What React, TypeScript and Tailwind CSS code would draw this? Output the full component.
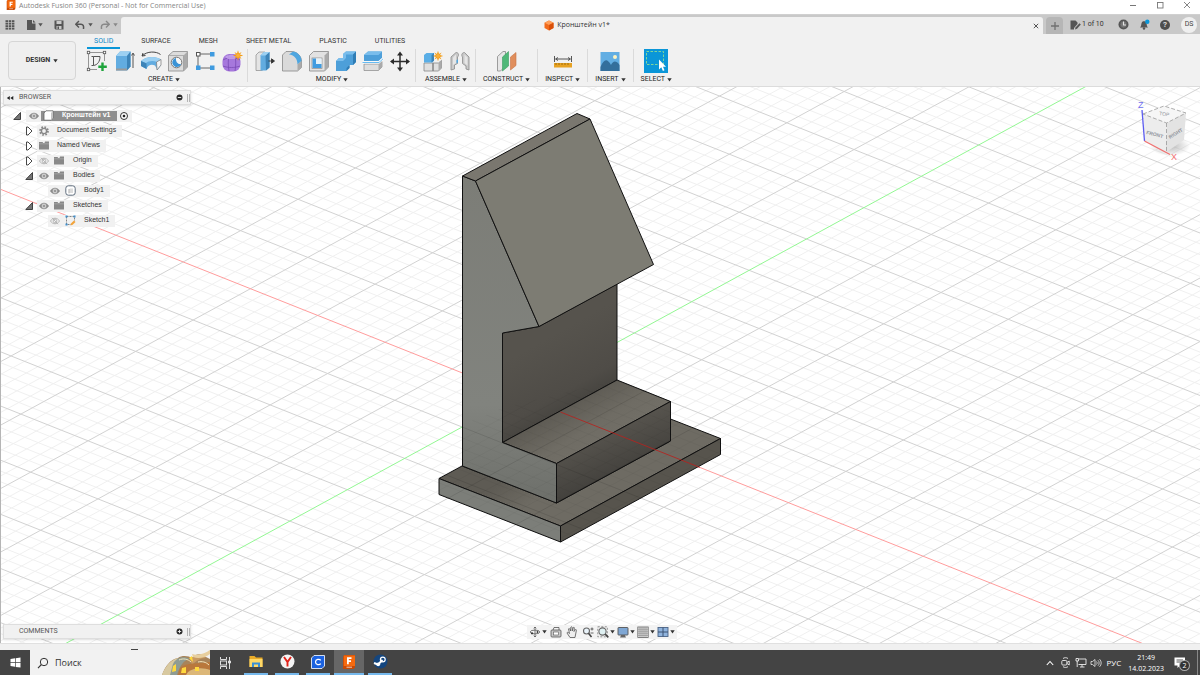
import React from "react";

type Pt = [number, number];

/* ---------- shared bits ---------- */

const Caret = ({ color = "#333" }: { color?: string }) => (
  <svg width="5" height="4" viewBox="0 0 5 4" aria-hidden="true" className="shrink-0">
    <path d="M0.3 0.3H4.7L2.5 3.6Z" fill={color} />
  </svg>
);

function Ico({ w = 24, h = 24, children }: { w?: number; h?: number; children: React.ReactNode }) {
  return (
    <svg width={w} height={h} viewBox={`0 0 ${w} ${h}`} fill="none" aria-hidden="true" className="shrink-0">
      {children}
    </svg>
  );
}

/* ---------- ribbon icons (24 x 24) ---------- */

const blue = "#62ace0";
const blueDark = "#3d84b8";
const blueLight = "#9cd0f2";

const Star = ({ x, y }: { x: number; y: number }) => (
  <g transform={`translate(${x} ${y})`}>
    <path
      d="M0-5.2 1-2 3.6-3.6 2-1 5.2 0 2 1 3.6 3.6 1 2 0 5.2-1 2-3.6 3.6-2 1-5.2 0-2-1-3.6-3.6-1-2Z"
      fill="#f39c12"
    />
    <circle r="2" fill="#fbb03b" />
  </g>
);

const SketchIcon = (
  <Ico>
    <path d="M5 3.5H18M3.5 5V19M19.5 5V12M5 20.5H12" stroke="#8a8a8a" strokeWidth=".9" />
    <path d="M8.500 7.500H15C15 12.500 12.500 16 8.500 16.500ZM6.500 7.500H8.500M8.500 16.500H6.500" stroke="#555" strokeWidth="1" />
    {[[3.5, 3.5], [19.5, 3.5], [3.5, 20.5]].map(([x, y]) => (
      <rect key={`${x}-${y}`} x={x - 1.2} y={y - 1.2} width="2.400" height="2.400" fill="#fff" stroke="#555" strokeWidth=".8" />
    ))}
    <path d="M17.500 13.500V22M13.300 17.800H21.800" stroke="#1fa43c" strokeWidth="2.400" />
  </Ico>
);

const ExtrudeIcon = (
  <Ico>
    <path d="M4 7 8 2.500H18.500V17.500L15 21.500H4Z" fill={blue} />
    <path d="M4 7 8 2.500H18.500L15 7Z" fill={blueLight} />
    <path d="M15 7 18.500 2.500V17.500L15 21.500Z" fill={blueDark} />
    <path d="M4 19.500H15V21.500H4Z" fill="#999" />
    <path d="M21 19V5M19.500 6.500 21 4 22.500 6.500" stroke="#444" strokeWidth=".9" />
  </Ico>
);

const RevolveIcon = (
  <Ico>
    <path d="M3 7C8 2 17 2 21.500 5.500M3 7 6.500 6.500M3 7 4 4" stroke="#444" strokeWidth="1" />
    <path d="M2 12C7 7 17 7 22 10.500V16L18.500 21 16 16.500C13 15 9 15.500 7.500 20L2 17Z" fill={blue} />
    <path d="M2 12C7 7 17 7 22 10.500L18 13C14 11 9 12 7 14Z" fill={blueLight} />
    <path d="M17.500 13 22 10.500V16L18 21Z" fill="#f4f4f4" stroke="#777" strokeWidth=".7" />
    <path d="M2 12 7.500 14.500V20L2 17Z" fill={blueDark} />
  </Ico>
);

const HoleIcon = (
  <Ico>
    <path d="M2.500 6.500 7 2.500H21.500V18L17.500 22H2.500Z" fill="#dcdcdc" stroke="#8a8a8a" strokeWidth=".8" />
    <path d="M17.500 6.500 21.500 2.500V18L17.500 22Z" fill="#aaa" />
    <path d="M2.500 6.500H17.500V22" stroke="#999" strokeWidth=".7" />
    <circle cx="10.500" cy="13.500" r="5.300" fill="#f7f7f7" stroke="#777" />
    <path d="M10 9A4.500 4.500 0 1 0 15 15C12 15.500 9.500 13 10 9Z" fill="#3a93d6" />
  </Ico>
);

const PatternIcon = (
  <Ico>
    <path d="M7 5H17M5 7V17M7 19H17" stroke="#666" strokeWidth="1" />
    <rect x="3.500" y="3.500" width="3.500" height="3.500" fill="#fff" stroke="#555" />
    <rect x="17" y="3" width="4.500" height="4.500" fill="#3f9be0" />
    <rect x="3" y="16.500" width="4.500" height="4.500" fill="#3f9be0" />
    <rect x="17" y="16.500" width="4.500" height="4.500" fill="#3f9be0" />
  </Ico>
);

const FormIcon = (
  <Ico>
    <rect x="2.500" y="5" width="18" height="17.500" rx="7" fill="#a678dc" />
    <path d="M3 11C8 8 15 8 20 11M3 17C8 19 15 19 20 17M9 5.500C8 11 8 17 9 22M15 6C16 11 16 17 15 22" stroke="#7a4bb5" strokeWidth=".8" />
    <path d="M5 8C8 5.500 13 5 17 7L15 10H8Z" fill="#c7a6ee" opacity=".8" />
    <Star x={18} y={6.500} />
  </Ico>
);

const PressPullIcon = (
  <Ico>
    <path d="M3 6 6 3H12V19L9 21.500H3Z" fill="#e4e4e4" stroke="#8a8a8a" strokeWidth=".7" />
    <path d="M7.500 6.500 11 3H16.500V18.500L13 21.500H7.500Z" fill={blue} />
    <path d="M12.500 6.500 16.500 3V18.500L13 21.500Z" fill={blueDark} />
    <path d="M7.500 6.500 11 3H16.500L12.500 6.500Z" fill={blueLight} />
    <path d="M15.500 12H20M18.500 9.800 21.500 12 18.500 14.200Z" stroke="#333" fill="#333" strokeWidth=".9" />
  </Ico>
);

const FilletIcon = (
  <Ico>
    <path d="M2.500 6 6 2.500H12C18 3 21.500 8 21.500 12V18.500L17.500 22H2.500Z" fill="#dadada" stroke="#888" strokeWidth=".8" />
    <path d="M9 5.500 13 2.500C19 3.500 21.500 8 21.500 12L17.500 15.500C17.500 10 14.500 6 9 5.500Z" fill="#4ea6e0" />
    <path d="M17.500 15.500 21.500 12V18.500L17.500 22Z" fill="#aaa" />
  </Ico>
);

const ShellIcon = (
  <Ico>
    <path d="M2.500 6.500 6.500 2.500H21.500V18L17.500 22H2.500Z" fill="#e2e2e2" stroke="#888" strokeWidth=".8" />
    <path d="M17.500 6.500 21.500 2.500V18L17.500 22Z" fill="#aaa" />
    <rect x="5" y="9" width="10" height="10.500" fill="#f8f8f8" stroke="#888" strokeWidth=".7" />
    <path d="M5.500 9.500H9V14.500L14.500 15V19H5.500Z" fill="#3f9be0" />
    <path d="M9 9.500H14.500V15H9Z" fill="#e4f1f9" />
  </Ico>
);

const CombineIcon = (
  <Ico>
    <path d="M2 12 5 9H9V5L12 2.500H22V13L19 16H15.500V19L12.500 22H2Z" fill="#4d9fd9" />
    <path d="M2 12 5 9H9V5L12 2.500H22L19 5.500H12V9L9 12Z" fill="#79bdec" />
    <path d="M19 5.500 22 2.500V13L19 16ZM12.500 19 15.500 16V19L12.500 22Z" fill="#2f7db5" />
  </Ico>
);

const SplitIcon = (
  <Ico>
    <path d="M3 6 7 2.500H21V9L17.500 12H3Z" fill="#4d9fd9" />
    <path d="M3 6 7 2.500H21L17.500 6Z" fill="#79bdec" />
    <path d="M3 15H17.500L21 12.500V18L17.500 21.500H3Z" fill="#dedede" stroke="#888" strokeWidth=".7" />
    <path d="M17.500 15 21 12.500V18L17.500 21.500Z" fill="#aaa" />
    <path d="M1.500 13.500H18L22 9.500" stroke="#fff" strokeWidth="2" />
    <path d="M1.500 13.500H18L22 9.800" stroke="#56b3ef" strokeWidth=".9" />
  </Ico>
);

const MoveIcon = (
  <Ico>
    <path d="M12 4V21M3.500 12.500H20.500" stroke="#2b2b2b" strokeWidth="1.500" />
    <path d="M12 2.500 15 6.500H9ZM12 22.500 9 18.500H15ZM2 12.500 6 9.500V15.500ZM22 12.500 18 15.500V9.500Z" fill="#2b2b2b" />
  </Ico>
);

const ComponentIcon = (
  <Ico>
    <path d="M3 14H12V22H3ZM12 14H17.500L20.500 11.500V19L17.500 22H12Z" fill="#e0e0e0" stroke="#888" strokeWidth=".8" />
    <path d="M17.500 14 20.500 11.500V19L17.500 22Z" fill="#aaa" />
    <path d="M3 6 5.500 4H13V11.500L11.500 13.500H3Z" fill="#5aaee6" />
    <path d="M10.500 6 13 4V11.500L10.500 13.500Z" fill={blueDark} />
    <path d="M12 14V22" stroke="#888" strokeWidth=".8" />
    <Star x={17} y={7} />
  </Ico>
);

const JointIcon = (
  <Ico>
    <path d="M3 8 8 3.500C10.500 3.500 11.500 6 9.500 8V14.500L6.500 16V20L3 21Z" fill="#c9c9c9" stroke="#8a8a8a" strokeWidth=".8" />
    <path d="M5 8.500 8 5.500V14L5 16Z" fill="#e6e6e6" />
    <path d="M21 8 16.500 3.500C14 3.500 13 6 14.500 8V14.500L18 17V20L21 21Z" fill="#c9c9c9" stroke="#8a8a8a" strokeWidth=".8" />
    <path d="M19.500 8.500 16.500 5.500V14L19.500 16.500Z" fill="#e6e6e6" />
    <path d="M8.500 11 10 10.500V13.500L8.500 14.500Z" fill="#4ea6e0" />
  </Ico>
);

const PlaneIcon = (
  <Ico>
    <path d="M2.500 7.500 8 2.500H10.500V17L5.500 22H2.500Z" fill="#e6e6e6" stroke="#888" strokeWidth=".8" />
    <path d="M7.500 8 13.500 2.500V17L7.500 22Z" fill="#4fb878" stroke="#389c5e" strokeWidth=".6" />
    <path d="M15.500 8 21 3.500V16.500L15.500 21Z" fill="#e08e5c" stroke="#c87443" strokeWidth=".6" />
  </Ico>
);

const MeasureIcon = (
  <Ico>
    <path d="M3.500 7V13M20.500 7V13M5 10H19M7 8.500 4.500 10 7 11.500M17 8.500 19.500 10 17 11.500" stroke="#444" strokeWidth=".9" />
    <rect x="3" y="14" width="18" height="4.500" fill="#e7a223" />
    <path d="M5 14V16M8 14V16M11 14V16M14 14V16M17 14V16" stroke="#8f5f08" strokeWidth=".8" />
  </Ico>
);

const ImageIcon = (
  <Ico>
    <rect x="2.500" y="3" width="19" height="19" fill="#62aee3" />
    <path d="M2.500 18C6 10 9 9 13 16C15 12 18 11 21.500 16V22H2.500Z" fill="#336f9c" />
    <circle cx="17" cy="8" r="2" fill="#fdf3c0" />
  </Ico>
);

const SelectIcon = (
  <Ico>
    <rect width="24" height="24" fill="#0a96d8" />
    <rect x="2.500" y="2.500" width="17" height="13" stroke="#7fd69a" strokeDasharray="2.500 1.500" />
    <path d="M15 10.500V20.500L17.300 18.300 18.900 22 20.500 21.300 19 17.800H22Z" fill="#fff" />
  </Ico>
);

/* ---------- small icons ---------- */

const GridDots = (
  <Ico w={10} h={10}>
    {[0, 1, 2, 3].flatMap((r) =>
      [0, 1, 2].map((c) => <rect key={`${r}${c}`} x={0.5 + c * 3.2} y={0.2 + r * 2.5} width="2.500" height="1.900" fill="#555" />)
    )}
  </Ico>
);

const FileIcon = (
  <Ico w={10} h={12}>
    <path d="M1 1H6V4.500H9.500V11H1Z" fill="#555" />
    <path d="M7 1 9.500 3.600H7Z" fill="#555" />
  </Ico>
);

const SaveIcon = (
  <Ico w={10} h={10}>
    <path d="M.5.5H9.500V9.500H1.500L.5 8.500Z" fill="#555" />
    <path d="M2.500 1H7.500V4H2.500ZM2.500 6H7.500V9H2.500Z" fill="#c9c9c9" />
    <path d="M3.500 6.500H5V9H3.500Z" fill="#555" />
  </Ico>
);

const Undo = ({ flip = false }: { flip?: boolean }) => (
  <Ico w={10} h={10}>
    <g transform={flip ? "translate(10 0) scale(-1 1)" : undefined}>
      <path d="M4 1 .8 4.200 4 7.400" stroke={flip ? "#888" : "#555"} strokeWidth="1.400" />
      <path d="M1 4.200H6C8 4.200 9 6 8.500 9" stroke={flip ? "#888" : "#555"} strokeWidth="1.500" />
    </g>
  </Ico>
);

const OrangeCube = (
  <Ico w={10} h={11}>
    <path d="M5 .5 9.500 2.800V8L5 10.500.5 8V2.800Z" fill="#f26a1b" />
    <path d="M5 .5 9.500 2.800 5 5 .5 2.800Z" fill="#ffa05c" />
    <path d="M5 5 9.500 2.800V8L5 10.500Z" fill="#d9500a" />
  </Ico>
);

const FusionLogo = ({ size }: { size: number }) => (
  <svg width={size} height={size} viewBox="0 0 14 14" aria-hidden="true" className="shrink-0">
    <path d="M1 1.500 2.500 0H13V12.500L11.500 14H1Z" fill="#c84a05" />
    <path d="M1.800.5H13V11H1.800Z" fill="#f56a0f" />
    <path d="M5 2.300H9.500V4H6.800V5.300H9V7H6.800V9.200H5Z" fill="#fff" />
    <path d="M4.500 12.200H10" stroke="#f6d9c6" strokeWidth=".9" />
  </svg>
);

const Eye = ({ off = false }: { off?: boolean }) => (
  <Ico w={10} h={8}>
    <path d="M.5 4C2.500.3 7.500.3 9.500 4 7.500 7.700 2.500 7.700.5 4Z" fill={off ? "#f3f3f3" : "#8a8a8a"} stroke={off ? "#a8a8a8" : "#8a8a8a"} strokeWidth=".8" />
    <circle cx="5" cy="4" r="1.900" fill={off ? "#f3f3f3" : "#999"} stroke={off ? "#a8a8a8" : "#eee"} strokeWidth=".8" />
    {off && <path d="M2 .8 8 7.200" stroke="#a8a8a8" strokeWidth=".8" />}
  </Ico>
);

const Folder = (
  <Ico w={10} h={9}>
    <path d="M0 1H3.500L4.300 2H5.500L6 .5H10V8.500H0Z" fill="#888" />
    <path d="M0 2.800H10" stroke="#b5b5b5" strokeWidth=".6" />
  </Ico>
);

const Gear = (
  <Ico w={10} h={10}>
    <circle cx="5" cy="5" r="3.900" stroke="#888" strokeWidth="1.900" strokeDasharray="1.600 1.460" />
    <circle cx="5" cy="5" r="2.600" stroke="#888" strokeWidth="1.400" />
  </Ico>
);

const BodyIcon = (
  <Ico w={11} h={11}>
    <rect x=".8" y=".8" width="9.400" height="9.400" rx="2.500" fill="#fff" stroke="#5f6d7d" />
    <path d="M3.500 4.500 5 3.500H8V8H3.500Z" fill="#dcdcdc" />
    <path d="M4 4V8.500" stroke="#aaa" strokeWidth=".7" />
  </Ico>
);

const RootIcon = (
  <Ico w={11} h={11}>
    <path d="M1 3 3 .8H10V8L8 10.200H1Z" fill="#fff" stroke="#666" strokeWidth=".8" />
    <path d="M8 3 10 .8V8L8 10.200Z" fill="#c4c4c4" />
  </Ico>
);

const SketchSmall = (
  <Ico w={11} h={11}>
    <path d="M1.500 1.500H9.500V6M1.500 1.500V9.500H6" stroke="#777" strokeWidth=".9" strokeDasharray="2 1" />
    <path d="M.5.5H2.500V2.500H.5ZM8.500.5H10.500V2.500H8.500ZM.5 8.500H2.500V10.500H.5Z" fill="#3f8fd0" />
    <path d="M5.500 10.500 6.200 8.300 9 5.500 10.500 7 7.700 9.800Z" fill="#f2a33a" />
  </Ico>
);

/* ---------- ribbon ---------- */

type Tool = [string, React.ReactNode];
const groups: { label: string; tools: Tool[] }[] = [
  { label: "CREATE", tools: [["Sketch", SketchIcon], ["Extrude", ExtrudeIcon], ["Revolve", RevolveIcon], ["Hole", HoleIcon], ["Pattern", PatternIcon], ["Form", FormIcon]] },
  { label: "MODIFY", tools: [["Press pull", PressPullIcon], ["Fillet", FilletIcon], ["Shell", ShellIcon], ["Combine", CombineIcon], ["Split body", SplitIcon], ["Move", MoveIcon]] },
  { label: "ASSEMBLE", tools: [["New component", ComponentIcon], ["Joint", JointIcon]] },
  { label: "CONSTRUCT", tools: [["Offset plane", PlaneIcon]] },
  { label: "INSPECT", tools: [["Measure", MeasureIcon]] },
  { label: "INSERT", tools: [["Insert image", ImageIcon]] },
  { label: "SELECT", tools: [["Window select", SelectIcon]] },
];

function Ribbon() {
  return (
    <div className="flex h-[53px] shrink-0 border-b border-[#dcdcdc] bg-[#f1f1f1]">
      <div className="flex w-20 shrink-0 pt-[7px] pb-1.5 pl-2">
        <button className="flex w-[68px] items-center justify-center gap-[3px] rounded-sm border border-[#d6d6d6] bg-[#efefef] text-[7px] font-bold text-[#333]">
          DESIGN <Caret />
        </button>
      </div>
      <div className="flex min-w-0 flex-1 flex-col">
        <nav className="flex h-[15px] gap-[14px] pl-[7px]">
          {["SOLID", "SURFACE", "MESH", "SHEET METAL", "PLASTIC", "UTILITIES"].map((t, i) => (
            <button
              key={t}
              className={
                i === 0
                  ? "border-b-2 border-[#0a96d8] px-[7px] pt-0.5 text-[7px] leading-[11px] text-[#0a86c8]"
                  : "border-b-2 border-transparent px-[7px] pt-0.5 text-[7px] leading-[11px] whitespace-nowrap text-[#333]"
              }
            >
              {t}
            </button>
          ))}
        </nav>
        <div className="flex h-[37px]">
          {groups.map((g) => (
            <div
              key={g.label}
              className={
                "flex h-[33px] flex-col items-center border-r " +
                (g.label === "SELECT" ? "border-transparent " : "border-[#dadada] ") +
                (g.tools.length > 1 ? "pr-0.5 pl-[3px]" : "px-[7px]")
              }
            >
              <div className="flex h-6">
                {g.tools.map(([name, icon]) => (
                  <button key={name} aria-label={name} className="flex w-[27px] justify-center">
                    {icon}
                  </button>
                ))}
              </div>
              <button className="flex h-[13px] shrink-0 items-center gap-0.5 text-[7px] leading-[13px] text-[#222]">
                {g.label} <Caret />
              </button>
            </div>
          ))}
        </div>
      </div>
    </div>
  );
}

/* ---------- scene ---------- */

const O: Pt = [519.5, 395.7];
const U: Pt = [67.26, 26.75];
const V: Pt = [57.4, -31.34];
const SPAN = 22;

function gridPath(major: boolean) {
  let d = "";
  for (let k = -SPAN * 5; k <= SPAN * 5; k++) {
    if ((k % 5 === 0) !== major || k === 0) continue;
    const t = k / 5;
    const line = (a: Pt, b: Pt) => {
      const f = (n: number) => n.toFixed(1);
      d += `M${f(O[0] + a[0] * t - b[0] * SPAN)} ${f(O[1] + a[1] * t - b[1] * SPAN)}L${f(O[0] + a[0] * t + b[0] * SPAN)} ${f(O[1] + a[1] * t + b[1] * SPAN)}`;
    };
    line(U, V);
    line(V, U);
  }
  return d;
}
const minor = gridPath(false);
const major = gridPath(true);
const axis = (v: Pt, from: number, to: number) => ({
  x1: O[0] + v[0] * from,
  y1: O[1] + v[1] * from,
  x2: O[0] + v[0] * to,
  y2: O[1] + v[1] * to,
});

function Scene() {
  return (
    <svg className="absolute inset-0 h-full w-full" viewBox="0 87 1200 556" preserveAspectRatio="xMidYMid slice" role="img" aria-label="Model canvas">
      <defs>
        <linearGradient id="left" x1="0" y1="0" x2="0" y2="1">
          <stop offset="0" stopColor="#7c7d77" />
          <stop offset=".7" stopColor="#81837e" />
          <stop offset="1" stopColor="#6d6f6a" />
        </linearGradient>
        <linearGradient id="wall" gradientUnits="userSpaceOnUse" x1="535" y1="345" x2="580" y2="425">
          <stop offset="0" stopColor="#56534d" />
          <stop offset=".6" stopColor="#4f4c47" />
          <stop offset="1" stopColor="#3d3c38" />
        </linearGradient>
        <linearGradient id="step" gradientUnits="userSpaceOnUse" x1="560" y1="405" x2="590" y2="455">
          <stop offset="0" stopColor="#5c5952" />
          <stop offset=".6" stopColor="#6f6c64" />
          <stop offset="1" stopColor="#726f67" />
        </linearGradient>
        <linearGradient id="front" gradientUnits="userSpaceOnUse" x1="605" y1="430" x2="625" y2="475">
          <stop offset="0" stopColor="#57544e" />
          <stop offset="1" stopColor="#42403c" />
        </linearGradient>
        <linearGradient id="baseTop" gradientUnits="userSpaceOnUse" x1="505" y1="480" x2="525" y2="508">
          <stop offset="0" stopColor="#5e5b54" />
          <stop offset="1" stopColor="#6e6b63" />
        </linearGradient>
        <clipPath id="lower">
          <path d="M462 425 502 408 617 380 670.500 401V419L720.500 438.500V454.500L560.500 542 439 494.500V478.500L462 466Z" />
        </clipPath>
      </defs>
      <rect y="0" width="1200" height="700" fill="#fff" />
      <path d={minor} stroke="#f0f0f0" strokeWidth="1" />
      <path d={major} stroke="#d2d2d2" strokeWidth="1" />
      <line {...axis(U, -10, 12)} stroke="#ff9c9c" />
      <line {...axis(V, -9, 12)} stroke="#93f793" />

      <g stroke="#111" strokeWidth="1" strokeLinejoin="round">
        <path d="M439 478.500 462 466 556.500 503 670.500 441V419L720.500 438.500 560.500 526Z" fill="url(#baseTop)" />
        <path d="M439 478.500 560.500 526V542L439 494.500Z" fill="#7c7e79" />
        <path d="M560.500 526 720.500 438.500V454.500L560.500 542Z" fill="#57544d" />
        <path d="M502.500 333 539 326.500 617 284V380L502.500 442.500Z" fill="url(#wall)" />
        <path d="M502.500 442.500 617 380 670.500 401.500 556.500 463.500Z" fill="url(#step)" />
        <path d="M556.500 463.500 670.500 401.500V441L556.500 503Z" fill="url(#front)" />
        <path d="M462.500 176 475.500 181 539 326.500 502.500 333V442.500L556.500 463.500V503L462.500 466Z" fill="url(#left)" />
        <path d="M462.500 176 577 113.500 590 119 475.500 181Z" fill="#7a776f" />
        <path d="M475.500 181 590 119 653.500 264.500 539 326.500Z" fill="#7d7c73" />
      </g>
      <g clipPath="url(#lower)">
        <path d={minor} stroke="#000" strokeOpacity=".03" />
        <path d={major} stroke="#000" strokeOpacity=".1" />
      </g>
      <line {...axis(U, 0.61, 2.68)} stroke="#b5221f" strokeOpacity=".85" />
    </svg>
  );
}

function ViewCube() {
  return (
    <button aria-label="View cube" className="absolute top-2 right-2.5">
      <svg width="56" height="68" viewBox="1134 95 56 68" fontFamily="Liberation Sans, sans-serif">
        <defs>
          <radialGradient id="shade">
            <stop offset="0" stopColor="#999" stopOpacity=".7" />
            <stop offset="1" stopColor="#999" stopOpacity="0" />
          </radialGradient>
        </defs>
        <ellipse cx="1170" cy="146" rx="20" ry="10" fill="url(#shade)" />
        <path d="M1143 114 1164 106 1186 113 1166.500 123Z" fill="#f6f6f6" />
        <path d="M1143 114 1166.500 123V152L1145 141Z" fill="#ededed" />
        <path d="M1166.500 123 1186 113 1184 140 1166.500 152Z" fill="#e3e3e3" />
        <path d="M1143 114 1164 106 1186 113 1166.500 123ZM1166.500 123V152" fill="none" stroke="#999" strokeWidth=".8" strokeDasharray="4 2" />
        <path d="M1142 110 1144.500 141" stroke="#5b5bf0" strokeWidth="1.300" />
        <path d="M1144.500 141 1170 154.500" stroke="#f07070" strokeWidth="1.300" />
        <text x="1138" y="108" fontSize="9" fill="#7070f0">Z</text>
        <text x="1171" y="160" fontSize="9" fill="#f37070">X</text>
        <text x="1146" y="134" fontSize="5" fontWeight="700" fill="#92979e" transform="rotate(14 1146 134)">FRONT</text>
        <text x="1170" y="139" fontSize="5" fontWeight="700" fill="#92979e" transform="rotate(-32 1170 139)">RIGHT</text>
        <text x="1159" y="115" fontSize="5" fill="#92979e" transform="rotate(8 1159 115)">TOP</text>
      </svg>
    </button>
  );
}

/* ---------- browser tree ---------- */

const Arrow = ({ open }: { open: boolean }) => (
  <Ico w={9} h={10}>
    {open ? <path d="M.8 8.500H7.500V1.500Z" fill="#777" stroke="#222" strokeWidth=".8" /> : <path d="M1.500 1V9L3 9 7 5 3 1Z" fill="#fff" stroke="#333" strokeWidth=".9" />}
  </Ico>
);

type Row = { label: string; pad: string; open?: boolean; eye?: "on" | "off"; icon: React.ReactNode };
const rows: Row[] = [
  { label: "Document Settings", pad: "pl-[22px]", open: false, icon: Gear },
  { label: "Named Views", pad: "pl-[22px]", open: false, icon: Folder },
  { label: "Origin", pad: "pl-[22px]", open: false, eye: "off", icon: Folder },
  { label: "Bodies", pad: "pl-[22px]", open: true, eye: "on", icon: Folder },
  { label: "Body1", pad: "pl-[45px]", eye: "on", icon: BodyIcon },
  { label: "Sketches", pad: "pl-[22px]", open: true, eye: "on", icon: Folder },
  { label: "Sketch1", pad: "pl-[45px]", eye: "off", icon: SketchSmall },
];

const Toggle = ({ plus = false }: { plus?: boolean }) => (
  <Ico w={7} h={7}>
    <circle cx="3.500" cy="3.500" r="3" fill="#2b2b2b" />
    <path d={plus ? "M1.800 3.500H5.200M3.500 1.800V5.200" : "M1.800 3.500H5.200"} stroke="#f1f1f1" strokeWidth=".9" />
  </Ico>
);

function PanelBar({ title, plus }: { title: string; plus?: boolean }) {
  return (
    <div className="flex h-[15px] w-[188px] items-center border border-[#dedede] bg-[#f1f1f1] pl-0.5 text-[7px] leading-[13px] text-[#555] shadow-sm">
      <span className="w-[13px]">
        {!plus && (
          <Ico w={8} h={6}>
            <path d="M3.800 1V5L.8 3ZM7.300 1V5L4.300 3Z" fill="#222" />
          </Ico>
        )}
      </span>
      <span className="flex-1">{title}</span>
      <button aria-label={`Toggle ${title.toLowerCase()}`} className="mr-1">
        <Toggle plus={plus} />
      </button>
      <span className="h-2 w-[3px] border-x border-[#b5b5b5]" />
    </div>
  );
}

function Browser() {
  return (
    <section className="absolute top-[3px] left-[3px] text-[7px] text-[#333]">
      <PanelBar title="BROWSER" />
      <ul className="pt-[3px] font-['Liberation_Sans',sans-serif]">
        <li className="flex h-[15px] items-center pl-2.5">
          <span className="w-[13px]">
            <Arrow open />
          </span>
          <div className="flex h-3 items-center bg-[#f1f1f1] pr-1">
            <span className="flex w-[15px] justify-center">
              <Eye />
            </span>
            <button className="flex h-2.5 items-center bg-[#8f8f8f] pr-[7px] font-bold whitespace-nowrap text-white">
              <span className="mr-[7px] flex w-3.5 justify-center">{RootIcon}</span>
              Кронштейн v1
            </button>
            <input type="radio" defaultChecked aria-label="Activate component" className="ml-[3px] h-2 w-2 appearance-none rounded-full border border-[#333] bg-[radial-gradient(#222_25%,#fff_40%)]" />
          </div>
        </li>
        {rows.map((r) => (
          <li key={r.label} className={`flex h-[15px] items-center ${r.pad}`}>
            {r.open !== undefined && (
              <span className="w-3 shrink-0">
                <Arrow open={r.open} />
              </span>
            )}
            <button className="flex h-3 items-center bg-[#f1f1f1] pr-1.5 whitespace-nowrap">
              {r.eye && (
                <span className="flex w-3.5 justify-center">
                  <Eye off={r.eye === "off"} />
                </span>
              )}
              <span className={r.eye ? "mr-1.5 flex w-4 justify-center" : "mr-1.5 flex w-3.5 justify-center"}>{r.icon}</span>
              {r.label}
            </button>
          </li>
        ))}
      </ul>
    </section>
  );
}

/* ---------- navigation bar ---------- */

const navTools: [string, boolean, React.ReactNode][] = [
  ["Orbit", true, <Ico w={12} h={12}><path d="M6 1V11M4.700 2.300 6 1 7.300 2.300M4.700 9.700 6 11 7.300 9.700" stroke="#555" strokeWidth=".8" /><ellipse cx="6" cy="6" rx="4.800" ry="1.900" stroke="#555" strokeWidth=".8" /><circle cx="3" cy="7.300" r="1.100" fill="#333" /><circle cx="8.500" cy="6" r=".9" fill="#333" /></Ico>],
  ["Look at", false, <Ico w={12} h={12}><rect x="1" y="4" width="10" height="7" rx="1" fill="#c9c9c9" stroke="#555" strokeWidth=".8" /><path d="M3 4 4 1.500H9V4" stroke="#555" strokeWidth=".8" /><rect x="3.500" y="6" width="5" height="3" fill="#fff" stroke="#555" strokeWidth=".6" /></Ico>],
  ["Pan", false, <Ico w={12} h={12}><path d="M4 11.500 1 7C1 6 2 6 3.500 7.500L2.500 3C3 2 4 2.500 4.500 5L4.800 1.200C5.300.5 6.200.7 6.200 1.500V5L7.300 1.500C8 1 8.600 1.500 8.400 2.500L8 5.500 9.500 3.500C10.300 3.300 10.600 4 10.300 4.800L9 11.500Z" fill="#eee" stroke="#555" strokeWidth=".8" /></Ico>],
  ["Zoom", false, <Ico w={12} h={12}><circle cx="4.500" cy="5" r="3" fill="#e9f3fa" stroke="#666" strokeWidth="1.100" /><path d="M6.500 7.300 9.500 11" stroke="#444" strokeWidth="1.600" /><path d="M8.500 3H11.500M10 1.500V4.500M8.500 7H11.500" stroke="#444" strokeWidth=".8" /></Ico>],
  ["Fit", true, <Ico w={12} h={12}><rect x=".8" y=".8" width="9.500" height="10" stroke="#777" strokeWidth=".8" strokeDasharray="2 1.500" /><circle cx="5.500" cy="5.500" r="3.600" fill="#dff0f2" stroke="#666" strokeWidth="1.100" /><path d="M8.200 8.200 11.300 11.300" stroke="#444" strokeWidth="1.700" /></Ico>],
  ["Display settings", true, <Ico w={12} h={12}><rect x="1" y="1.500" width="10" height="7.500" rx=".6" fill="#7fa7d4" stroke="#555" strokeWidth=".9" /><path d="M3 11.500H9L7.800 9H4.200Z" fill="#666" /></Ico>],
  ["Grid and snaps", true, <Ico w={12} h={12}><rect x=".8" y="1" width="10.400" height="10.400" fill="#eee" stroke="#666" strokeWidth=".8" /><path d="M3 1V11.500M5 1V11.500M7 1V11.500M9 1V11.500M1 3.200H11M1 5.200H11M1 7.200H11M1 9.300H11" stroke="#777" strokeWidth=".6" /></Ico>],
  ["Viewports", true, <Ico w={12} h={12}><rect x="1" y="1.500" width="10" height="9" fill="#8fb3dd" stroke="#4a6385" strokeWidth=".9" /><path d="M6 1.500V10.500M1 6H11" stroke="#3c5272" strokeWidth="1" /></Ico>],
];

/* ---------- app ---------- */

export default function App() {
  return (
    <div className="flex h-screen flex-col overflow-hidden bg-white font-[Roboto,'Noto_Sans',sans-serif] text-[7px] text-[#333]">
      {/* window title */}
      <header className="flex h-[14px] shrink-0 items-start justify-between pl-[6px]">
        <div className="flex items-start gap-[3px] font-['Open_Sans',sans-serif] text-[7px] leading-[11px] whitespace-nowrap text-[#858585]">
          <FusionLogo size={10} />
          Autodesk Fusion 360 (Personal - Not for Commercial Use)
        </div>
        <div className="flex h-[10px] w-20 items-center justify-around">
          <button aria-label="Minimize"><Ico w={8} h={8}><path d="M1 4.500H7" stroke="#777" /></Ico></button>
          <button aria-label="Maximize"><Ico w={8} h={8}><rect x="1.500" y="1.500" width="5.500" height="5.500" stroke="#777" strokeWidth=".9" /></Ico></button>
          <button aria-label="Close"><Ico w={8} h={8}><path d="M1 1 7 7M7 1 1 7" stroke="#777" strokeWidth=".9" /></Ico></button>
        </div>
      </header>

      {/* document bar */}
      <div className="flex h-5 shrink-0 border-t border-[#d0d0d0] bg-[#c9c9c9]">
        <div className="flex w-[121px] shrink-0 items-center pl-[5px]">
          <button aria-label="Data panel">{GridDots}</button>
          <button aria-label="File" className="ml-[11px] flex items-center gap-0.5">{FileIcon}<Caret color="#555" /></button>
          <button aria-label="Save" className="ml-[11px]">{SaveIcon}</button>
          <button aria-label="Undo" className="ml-[11px] flex items-center gap-[3px]"><Undo /><Caret color="#555" /></button>
          <button aria-label="Redo" className="ml-[7px] flex items-center gap-[3px]"><Undo flip /><Caret color="#888" /></button>
        </div>
        <div className="mt-0.5 flex min-w-0 flex-1 items-center rounded-t-[3px] bg-[#f1f1f1] pr-1">
          <div className="flex flex-1 items-center justify-center gap-[3px] font-['Open_Sans',sans-serif] text-[7px] text-[#333]">
            {OrangeCube}Кронштейн v1*
          </div>
          <button aria-label="Close tab"><Ico w={6} h={6}><path d="M.8.8 5.200 5.200M5.200.8.8 5.200" stroke="#555" /></Ico></button>
        </div>
        <div className="flex shrink-0 items-center pr-[3px] pl-[3px]">
          <button aria-label="New tab" className="mt-0.5 flex h-[17px] w-[17px] items-center justify-center rounded-t-sm bg-[#b6b6b6]">
            <Ico w={8} h={8}><path d="M4 0V8M0 4H8" stroke="#707070" strokeWidth="1.300" /></Ico>
          </button>
          <button className="ml-[7px] flex w-[34px] items-center gap-px text-[7px] whitespace-nowrap text-[#333]">
            <Ico w={11} h={10}><path d="M.5.5H5.500L7.500 2.500V4L4 8V9.500H.5Z" fill="#555" /><path d="M5 9.500 5.500 7.500 9.500 3.300 10.800 4.600 7 8.800Z" fill="#555" /></Ico>
            1 of 10
          </button>
          <button aria-label="Job status" className="ml-[14px]"><Ico w={11} h={11}><circle cx="5.500" cy="5.500" r="5" fill="#555" /><circle cx="5.500" cy="5.500" r="3.400" fill="#777" stroke="#555" strokeWidth=".6" /><path d="M5.500 2.500V6H8" stroke="#e4e4e4" strokeWidth="1.100" /></Ico></button>
          <button aria-label="Notifications" className="ml-[10px]"><Ico w={11} h={11}><path d="M1 8.500C2.500 7.500 2 5 2.800 3.500 3.500 1.800 6.500 1.800 7.300 3.500 8 5 7.500 7.500 9 8.500Z" fill="#555" /><circle cx="5" cy="9.500" r="1.200" fill="#555" /><circle cx="8.300" cy="2.800" r="2.200" fill="#0a96d8" /></Ico></button>
          <button aria-label="Help" className="ml-[10px] flex h-[10px] w-[10px] items-center justify-center rounded-full bg-[#4d4d4d] text-[8px] leading-[10px] font-bold text-[#ddd]">?</button>
          <button className="ml-[11px] flex h-4 w-4 items-center justify-center rounded-full bg-[#efefef] text-[7px] text-[#444]">DS</button>
        </div>
      </div>

      <Ribbon />

      {/* canvas */}
      <main className="relative min-h-0 flex-1 overflow-hidden">
        <Scene />
        <div className="absolute inset-y-0 left-0 w-px bg-[#b5b5b5]" />
        <Browser />
        <ViewCube />
        <section className="absolute bottom-1 left-[3px]">
          <PanelBar title="COMMENTS" plus />
        </section>
        <div className="absolute inset-x-0 bottom-1 flex justify-center pl-1">
          <div className="flex h-[14px] items-center gap-0.5 bg-[#f3f3f3] px-0.5">
            {navTools.map(([name, caret, icon]) => (
              <button key={name} aria-label={name} className={caret ? "flex h-full items-center" : "flex h-full items-center px-px"}>
                {icon}
                {caret && <span className="pl-px"><Caret /></span>}
              </button>
            ))}
          </div>
        </div>
      </main>

      <div className="flex h-[7px] shrink-0 items-end border-t border-[#e0e0e0] bg-[#f0f0f0] pl-[131px]">
        <span className="h-px w-[7px] bg-[#444]" />
      </div>

      {/* taskbar */}
      <footer className="flex h-[25px] shrink-0 bg-[#444] font-['Open_Sans',sans-serif] text-white">
        <button aria-label="Start" className="flex w-[30px] items-center justify-center">
          <Ico w={11} h={11}><path d="M.5 2 5 1.300V5.200H.5ZM5.700 1.200 10.500.5V5.200H5.700ZM.5 5.900H5V9.800L.5 9.100ZM5.700 5.900H10.500V10.600L5.700 9.900Z" fill="#fff" /></Ico>
        </button>
        <label className="flex w-[180px] items-center overflow-hidden bg-[#f2f2f2] pl-[7px]">
          <Ico w={12} h={12}><circle cx="7" cy="5" r="3.700" stroke="#333" /><path d="M4.300 7.700 1 11.200" stroke="#333" strokeWidth="1.200" /></Ico>
          <input type="search" aria-label="Поиск" placeholder="Поиск" className="ml-1.5 min-w-0 flex-1 bg-transparent text-[9px] text-[#333] outline-none placeholder:text-[#333]" />
          <svg width="48" height="25" viewBox="0 0 48 25" aria-hidden="true" className="shrink-0">
            <path d="M0 25C3 17 8 9 16 8 20 5 27 6 30 8 33 4 38 3 42 6L48 9V25Z" fill="#a8845a" />
            <path d="M0 25C3 17 8 10 16 8 13 14 12 20 9 25Z" fill="#d8c9a0" />
            <path d="M12 12C16 7 22 6 28 9 22 10 18 15 15 25H8C10 19 10 15 12 12Z" fill="#8f9c93" />
            <path d="M28 9C33 4 40 4 44 8 38 8 34 11 30 15Z" fill="#c99a63" />
            <path d="M30 4C36 6 44 3 48 0V4C43 8 36 9 31 7Z" fill="#e8cf9e" />
            <path d="M18 18C25 12 36 14 48 12V20C38 17 30 19 24 25H16Z" fill="#b9783c" />
            <path d="M26 22C33 17 42 18 48 20V25H24Z" fill="#dcb778" />
            <path d="M11 16 14 14V21L10 22ZM27 8 30 6 31 12ZM20 18 24 17V23H19ZM33 17H37V21H33Z" fill="#ffd93e" />
            <path d="M17 10C21 8 26 9 29 12M36 12C40 11 44 12 47 15" stroke="#f4e6bb" fill="none" />
          </svg>
        </label>
        <nav className="flex gap-px">
          <button aria-label="Task view" className="flex w-[30px] items-center justify-center">
            <Ico w={12} h={12}><path d="M1.500 0V2.500H7.500V0M1.500 12V9.500H7.500V12" stroke="#ddd" /><rect x="1.500" y="4" width="6" height="4" stroke="#ddd" /><path d="M10.500 0V12M9.500 4H11.500V6H9.500Z" stroke="#ddd" /></Ico>
          </button>
          <button aria-label="File Explorer" className="mx-[3px] flex w-6 items-center justify-center border-b-2 border-[#76b9ed]">
            <Ico w={14} h={13}><path d="M.5 1H5.500L7 2.500H13.500V12H.5Z" fill="#e9ac28" /><path d="M.5 4H13.500V12H.5Z" fill="#ffd867" /><path d="M3 12V7.500H11V12H9V9.500H5V12Z" fill="#3a8fd6" /></Ico>
          </button>
          <button aria-label="Yandex Browser" className="mx-[3px] flex w-6 items-center justify-center border-b-2 border-[#76b9ed]">
            <Ico w={15} h={15}><circle cx="7.500" cy="7.500" r="7" fill="#f4f4f4" /><path d="M4 3 7.500 8 11 3M7.500 8V12.500" stroke="#e2231a" strokeWidth="1.900" /></Ico>
          </button>
          <button aria-label="Compass 3D" className="mx-[3px] flex w-6 items-center justify-center border-b-2 border-[#76b9ed]">
            <Ico w={14} h={14}><path d="M3 .5H13.500V11L11 13.500H.5V3Z" fill="#1b62e0" stroke="#e7eefb" strokeWidth=".9" /><path d="M9.800 5.300C8.500 3.700 4.500 4 4.500 7S8.500 10.300 9.800 8.700" stroke="#fff" strokeWidth="1.200" /></Ico>
          </button>
          <button aria-label="Fusion 360" className="flex w-[30px] items-center justify-center border-b-2 border-[#76b9ed] bg-[#666]">
            <FusionLogo size={14} />
          </button>
          <button aria-label="Steam" className="mx-[3px] flex w-6 items-center justify-center border-b-2 border-[#76b9ed]">
            <Ico w={15} h={15}><circle cx="7.500" cy="7.500" r="7" fill="#14467f" /><path d="M1 9 5 10.500 9.500 6" stroke="#fff" strokeWidth="2" /><circle cx="9.800" cy="5.500" r="2.400" stroke="#fff" strokeWidth="1.200" /><circle cx="5.200" cy="10.300" r="1.900" fill="#fff" /></Ico>
          </button>
        </nav>
        <div className="ml-auto flex items-center">
          <button aria-label="Hidden icons"><Ico w={8} h={8}><path d="M.8 6 4 2.500 7.200 6" stroke="#fff" strokeWidth="1.100" /></Ico></button>
          <button aria-label="Meet now" className="ml-[7px]"><Ico w={9} h={11}><rect x=".8" y="3.500" width="5" height="4.500" rx="1" stroke="#eee" strokeWidth=".9" /><path d="M6 5.500 8.200 4V8L6 6.500M2 1.500C3.500.4 5.500.4 7 1.500M2 9.700C3.500 10.700 5.500 10.700 7 9.700" stroke="#eee" strokeWidth=".9" /></Ico></button>
          <button aria-label="Network" className="ml-[5px]"><Ico w={12} h={11}><path d="M4 2H11V7.500H3.500M7 7.500V10M5 10H9.500" stroke="#eee" strokeWidth=".9" /><path d="M1 1.500H3.500V4H1ZM2.200 4V10" stroke="#eee" strokeWidth=".9" /></Ico></button>
          <button aria-label="Volume" className="ml-[3px]"><Ico w={12} h={10}><path d="M1 3.500H2.500L5 1.500V8.500L2.500 6.500H1ZM6.500 3.500C7.300 4.300 7.300 5.700 6.500 6.500M8 2.300C9.500 3.700 9.500 6.300 8 7.700M9.500 1.200C11.700 3.200 11.700 6.800 9.500 8.800" stroke="#eee" strokeWidth=".8" /></Ico></button>
          <button className="ml-[5px] text-[8px]">РУС</button>
          <time className="ml-[7px] text-center text-[7px] leading-[11px]">
            21:49
            <br />
            14.02.2023
          </time>
          <button aria-label="Notifications, 2 new" className="relative mr-[11px] ml-[10px]">
            <Ico w={12} h={12}><path d="M.5.5H11V8.500H6L3.500 11V8.500H.5Z" fill="#fff" /><path d="M2.500 3H9M2.500 5H9" stroke="#444" strokeWidth=".9" /></Ico>
            <span className="absolute top-1 left-1.5 flex h-[9px] w-[9px] items-center justify-center rounded-full bg-[#333] text-[7px] leading-[9px] ring-1 ring-[#aaa]">2</span>
          </button>
          <span className="h-full w-[3px] border-l border-[#888]" />
        </div>
      </footer>
    </div>
  );
}
